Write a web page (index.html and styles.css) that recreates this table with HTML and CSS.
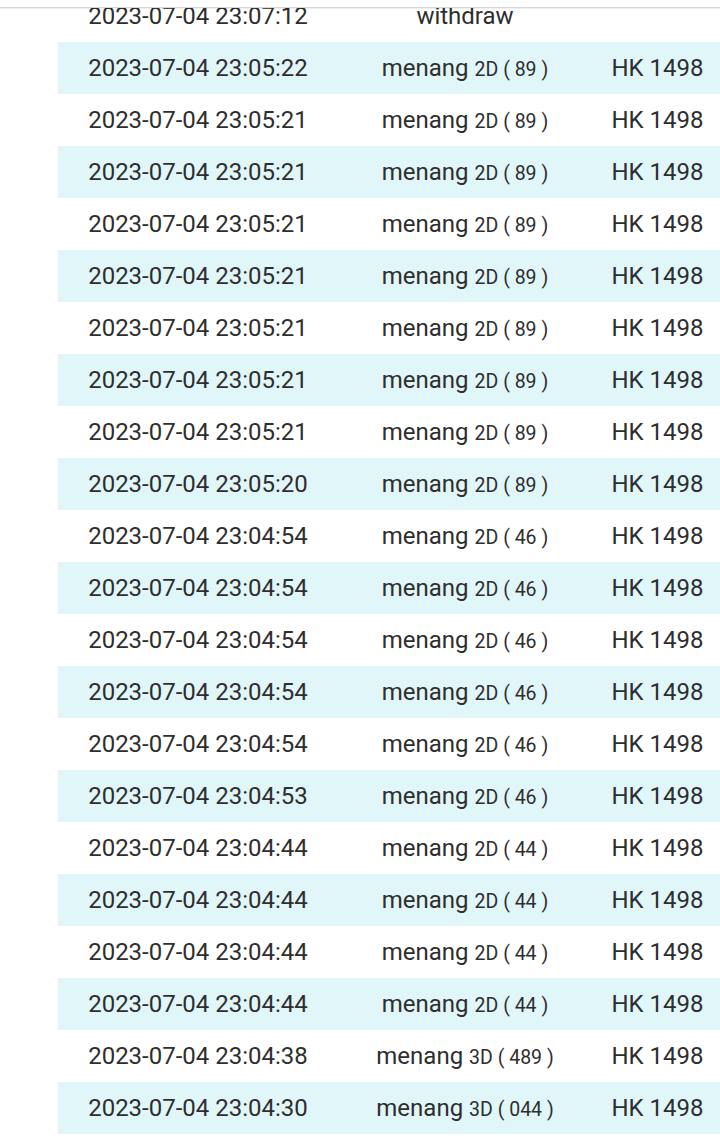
FILE: index.html
```html
<!DOCTYPE html>
<html>
<head>
<meta charset="utf-8">
<link rel="stylesheet" href="styles.css">
</head>
<body>
<div class="topbar"></div>
<div class="history">
  <div class="row"><span>2023-07-04 23:07:12</span><span>withdraw</span><span></span></div>
  <div class="row alt"><span>2023-07-04 23:05:22</span><span>menang <small>2D ( 89 )</small></span><span>HK 1498</span></div>
  <div class="row"><span>2023-07-04 23:05:21</span><span>menang <small>2D ( 89 )</small></span><span>HK 1498</span></div>
  <div class="row alt"><span>2023-07-04 23:05:21</span><span>menang <small>2D ( 89 )</small></span><span>HK 1498</span></div>
  <div class="row"><span>2023-07-04 23:05:21</span><span>menang <small>2D ( 89 )</small></span><span>HK 1498</span></div>
  <div class="row alt"><span>2023-07-04 23:05:21</span><span>menang <small>2D ( 89 )</small></span><span>HK 1498</span></div>
  <div class="row"><span>2023-07-04 23:05:21</span><span>menang <small>2D ( 89 )</small></span><span>HK 1498</span></div>
  <div class="row alt"><span>2023-07-04 23:05:21</span><span>menang <small>2D ( 89 )</small></span><span>HK 1498</span></div>
  <div class="row"><span>2023-07-04 23:05:21</span><span>menang <small>2D ( 89 )</small></span><span>HK 1498</span></div>
  <div class="row alt"><span>2023-07-04 23:05:20</span><span>menang <small>2D ( 89 )</small></span><span>HK 1498</span></div>
  <div class="row"><span>2023-07-04 23:04:54</span><span>menang <small>2D ( 46 )</small></span><span>HK 1498</span></div>
  <div class="row alt"><span>2023-07-04 23:04:54</span><span>menang <small>2D ( 46 )</small></span><span>HK 1498</span></div>
  <div class="row"><span>2023-07-04 23:04:54</span><span>menang <small>2D ( 46 )</small></span><span>HK 1498</span></div>
  <div class="row alt"><span>2023-07-04 23:04:54</span><span>menang <small>2D ( 46 )</small></span><span>HK 1498</span></div>
  <div class="row"><span>2023-07-04 23:04:54</span><span>menang <small>2D ( 46 )</small></span><span>HK 1498</span></div>
  <div class="row alt"><span>2023-07-04 23:04:53</span><span>menang <small>2D ( 46 )</small></span><span>HK 1498</span></div>
  <div class="row"><span>2023-07-04 23:04:44</span><span>menang <small>2D ( 44 )</small></span><span>HK 1498</span></div>
  <div class="row alt"><span>2023-07-04 23:04:44</span><span>menang <small>2D ( 44 )</small></span><span>HK 1498</span></div>
  <div class="row"><span>2023-07-04 23:04:44</span><span>menang <small>2D ( 44 )</small></span><span>HK 1498</span></div>
  <div class="row alt"><span>2023-07-04 23:04:44</span><span>menang <small>2D ( 44 )</small></span><span>HK 1498</span></div>
  <div class="row"><span>2023-07-04 23:04:38</span><span>menang <small>3D ( 489 )</small></span><span>HK 1498</span></div>
  <div class="row alt"><span>2023-07-04 23:04:30</span><span>menang <small>3D ( 044 )</small></span><span>HK 1498</span></div>
</div>
</body>
</html>
```

FILE: styles.css
```css
html, body {
  margin: 0;
  padding: 0;
  background: #ffffff;
  overflow: hidden;
}
body {
  width: 720px;
  height: 1148px;
  font-family: Roboto, "Liberation Sans", sans-serif;
  color: #2e2e2e;
  position: relative;
}
.topbar {
  position: absolute;
  top: 0;
  left: 0;
  right: 0;
  height: 7px;
  background: #ffffff;
  border-bottom: 1px solid #d6d6d6;
  box-shadow: 0 1px 1px rgba(0,0,0,0.06);
  z-index: 2;
}
.history {
  margin-top: -10px;
  margin-left: 58px;
  width: 665px;
}
.row {
  display: grid;
  grid-template-columns: 280px 254px 131px;
  height: 52px;
  align-items: center;
  font-size: 24px;
  text-align: center;
}
.row.alt {
  background: #e1f6f9;
}
.row small {
  font-size: 19.5px;
}
```
